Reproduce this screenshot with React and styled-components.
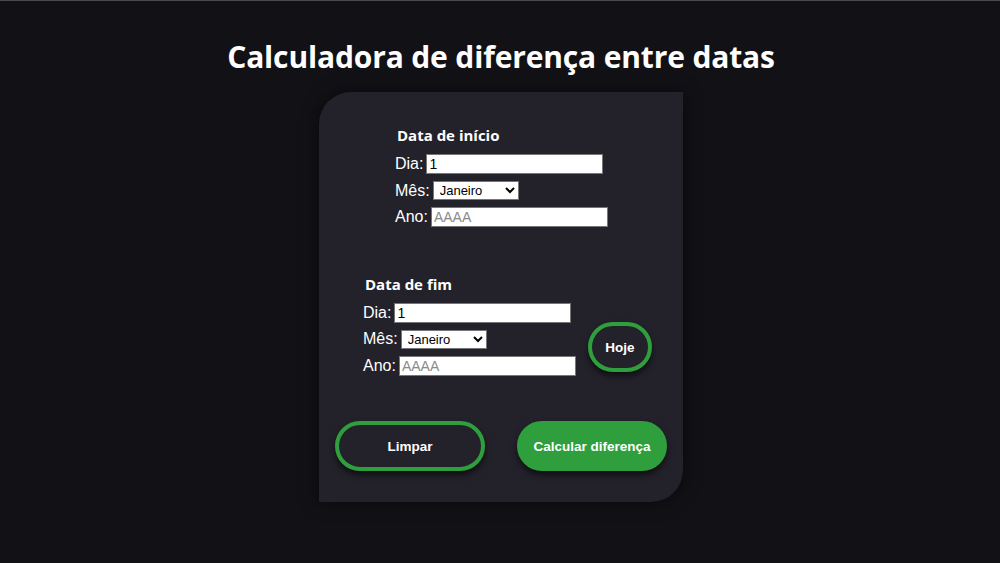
import styled, { createGlobalStyle } from "styled-components";

const GlobalStyle = createGlobalStyle`
  html, body {
    margin: 0;
    padding: 0;
    background: #121116;
  }
  body {
    border-top: 1px solid #4a4a4d;
    min-height: 562px;
    font-family: "Liberation Sans", Arial, sans-serif;
    color: #ffffff;
  }
`;

const Page = styled.main`
  display: flex;
  flex-direction: column;
  align-items: center;
  padding-top: 37px;
  padding-left: 2px;
`;

const Title = styled.h1`
  margin: 0 0 16px;
  font-family: "Open Sans", "Noto Sans", sans-serif;
  font-size: 30px;
  font-weight: 700;
  letter-spacing: -0.15px;
  line-height: 38px;
  color: #ffffff;
`;

const Card = styled.section`
  width: 364px;
  box-sizing: border-box;
  background: #23222b;
  border-radius: 32px 0 32px 0;
  box-shadow: 0 0 18px rgba(0, 0, 0, 0.55);
  padding: 33px 16px 31px;
  display: flex;
  flex-direction: column;
`;

const Section = styled.div`
  display: flex;
  align-items: flex-start;
  gap: 12px;
  padding-left: ${(p) => p.$indent}px;
  margin-bottom: ${(p) => p.$after}px;
`;

const Fields = styled.div`
  display: flex;
  flex-direction: column;
`;

const Heading = styled.h3`
  margin: 0 0 6px 2px;
  font-family: "Open Sans", "Noto Sans", sans-serif;
  font-size: 15px;
  font-weight: 700;
  line-height: 20px;
  color: #ffffff;
`;

const Row = styled.label`
  display: flex;
  align-items: center;
  gap: 3px;
  height: 26.5px;
  font-size: 16px;
  color: #ffffff;
`;

const TextInput = styled.input`
  box-sizing: border-box;
  width: 177px;
  height: 20px;
  padding: 0 2px;
  border: 1px solid #767676;
  background: #ffffff;
  font-family: "Liberation Sans", Arial, sans-serif;
  font-size: 14px;
  color: #000000;
  outline: none;

  &::placeholder {
    color: #8a8a8a;
  }
`;

const Select = styled.select`
  box-sizing: border-box;
  width: 86px;
  height: 19px;
  padding: 0 0 0 2px;
  border: 1px solid #767676;
  background: #ffffff;
  font-family: "Liberation Sans", Arial, sans-serif;
  font-size: 13px;
  color: #000000;
`;

const Actions = styled.div`
  display: flex;
  justify-content: space-between;
`;

const Button = styled.button`
  box-sizing: border-box;
  width: ${(p) => p.$width}px;
  height: 50px;
  border-radius: 25px;
  border: 4px solid #2e9f3c;
  background: ${(p) => (p.$filled ? "#2e9f3c" : "transparent")};
  color: #ffffff;
  font-family: "Liberation Sans", Arial, sans-serif;
  font-size: 13.5px;
  font-weight: 700;
  box-shadow: 0 4px 6px rgba(0, 0, 0, 0.6);
  cursor: pointer;
`;

const TodayButton = styled(Button)`
  align-self: flex-end;
  margin-bottom: 7px;
`;

const months = [
  "Janeiro",
  "Fevereiro",
  "Março",
  "Abril",
  "Maio",
  "Junho",
  "Julho",
  "Agosto",
  "Setembro",
  "Outubro",
  "Novembro",
  "Dezembro",
];

function DateFields({ title }) {
  return (
    <Fields>
      <Heading>{title}</Heading>
      <Row>
        Dia: <TextInput type="text" defaultValue="1" />
      </Row>
      <Row>
        Mês:
        <Select defaultValue="Janeiro">
          {months.map((m) => (
            <option key={m}>{m}</option>
          ))}
        </Select>
      </Row>
      <Row>
        Ano: <TextInput type="text" placeholder="AAAA" />
      </Row>
    </Fields>
  );
}

export default function App() {
  return (
    <>
      <GlobalStyle />
      <Page>
        <Title>Calculadora de diferença entre datas</Title>
        <Card>
          <Section $indent={60} $after={43}>
            <DateFields title="Data de início" />
          </Section>
          <Section $indent={28} $after={42}>
            <DateFields title="Data de fim" />
            <TodayButton $width={64}>Hoje</TodayButton>
          </Section>
          <Actions>
            <Button $width={150}>Limpar</Button>
            <Button $width={150} $filled>
              Calcular diferença
            </Button>
          </Actions>
        </Card>
      </Page>
    </>
  );
}
